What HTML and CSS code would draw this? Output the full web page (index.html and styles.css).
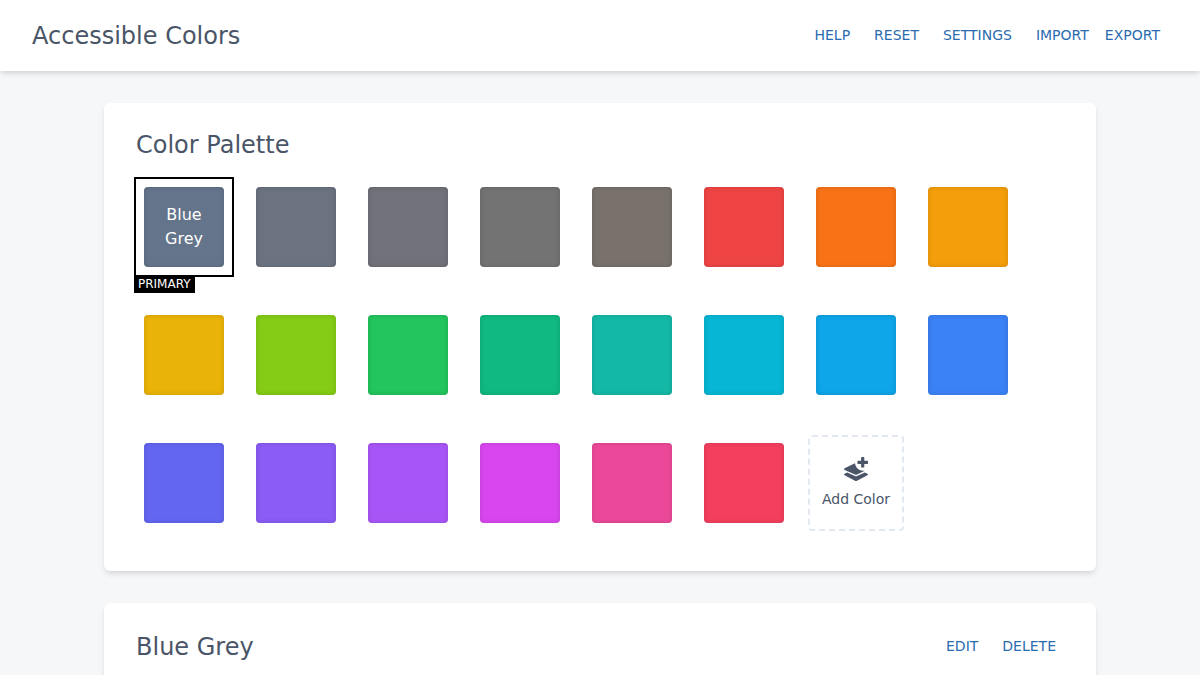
FILE: index.html
```html
<!DOCTYPE html>
<html lang="en">
<head>
    <meta charset="UTF-8">
    <meta name="viewport" content="width=device-width, initial-scale=1.0">
    <title>Accessible Colors</title>
    <link rel="stylesheet" href="styles.css">
</head>
<body>
    <header class="header">
        <h1>Accessible Colors</h1>
        <nav class="actions">
            <button class="link">Help</button>
            <button class="link">Reset</button>
            <button class="link">Settings</button>
            <div class="group">
                <button class="link">Import</button>
                <button class="link">Export</button>
            </div>
        </nav>
    </header>

    <main class="container">
        <section class="card">
            <h2>Color Palette</h2>
            <div class="palette" id="palette">
                <button class="add-color" id="addColor">
                    <svg class="icon" viewBox="0 0 24 24" fill="currentColor">
                        <path d="M17.800 0h1.800q.7 0 .7.700v3h3q.7 0 .7.700v1.800q0 .7-.7.700h-3v3q0 .7-.7.700h-1.800q-.7 0-.7-.700v-3h-3q-.7 0-.7-.700V4.400q0-.7.700-.7h3v-3q0-.7.700-.7z"/>
                        <path d="M.6 11.300L11 6.200c.4 3.600 3 6.600 6.800 7.400 1 .2 2 .3 3 .1L13 17.600q-1 .5-2 0L.6 12.900q-1.200-.8 0-1.600z"/>
                        <path d="M.6 16.800L3.200 15.600 11 19.100q1 .5 2 0l7.800-3.500 2.600 1.200q1.200.8 0 1.500L13 23.700q-1 .5-2 0L.6 18.300q-1.200-.7 0-1.500z"/>
                    </svg>
                    <span>Add Color</span>
                </button>
            </div>
        </section>

        <section class="card details">
            <div class="card-header">
                <h2>Blue Grey</h2>
                <div class="actions">
                    <button class="link">Edit</button>
                    <button class="link">Delete</button>
                </div>
            </div>
        </section>
    </main>

    <script>
        let palette = document.getElementById('palette');
        let addColor = document.getElementById('addColor');
        let primary = 'Blue Grey';
        let colors = [
            { name: 'Blue Grey', value: '#64748b' },
            { name: 'Cool Grey', value: '#6b7280' },
            { name: 'Grey', value: '#71717a' },
            { name: 'True Grey', value: '#737373' },
            { name: 'Warm Grey', value: '#78716c' },
            { name: 'Red', value: '#ef4444' },
            { name: 'Orange', value: '#f97316' },
            { name: 'Amber', value: '#f59e0b' },
            { name: 'Yellow', value: '#eab308' },
            { name: 'Lime', value: '#84cc16' },
            { name: 'Green', value: '#22c55e' },
            { name: 'Emerald', value: '#10b981' },
            { name: 'Teal', value: '#14b8a6' },
            { name: 'Cyan', value: '#06b6d4' },
            { name: 'Light Blue', value: '#0ea5e9' },
            { name: 'Blue', value: '#3b82f6' },
            { name: 'Indigo', value: '#6366f1' },
            { name: 'Violet', value: '#8b5cf6' },
            { name: 'Purple', value: '#a855f7' },
            { name: 'Fuchsia', value: '#d946ef' },
            { name: 'Pink', value: '#ec4899' },
            { name: 'Rose', value: '#f43f5e' }
        ];

        colors.forEach(color => {
            let item = document.createElement('div');
            item.className = 'color';
            let swatch = document.createElement('button');
            swatch.className = 'swatch';
            swatch.style.backgroundColor = color.value;
            swatch.setAttribute('aria-label', color.name);
            item.appendChild(swatch);
            if (color.name === primary) {
                item.classList.add('selected');
                swatch.innerText = color.name;
                let label = document.createElement('span');
                label.className = 'label';
                label.innerText = 'Primary';
                item.appendChild(label);
            }
            palette.insertBefore(item, addColor);
        });
    </script>
</body>
</html>
```
FILE: styles.css
```css
* {
    box-sizing: border-box;
}
body {
    margin: 0;
    height: 100vh;
    background: #f6f7f9;
    color: #4a5568;
    font-family: 'DejaVu Sans', sans-serif;
    font-size: 16px;
    line-height: 24px;
    overflow: hidden;
}
h1, h2 {
    margin: 0;
    font-size: 24px;
    font-weight: normal;
    line-height: 36px;
}
button {
    border: none;
    background: none;
    padding: 0;
    color: inherit;
    font-family: inherit;
    cursor: pointer;
}
.header {
    display: flex;
    justify-content: space-between;
    align-items: center;
    height: 71px;
    padding: 0 32px;
    background: #fff;
    box-shadow: 0 4px 6px -1px rgba(0, 0, 0, 0.1), 0 2px 4px -1px rgba(0, 0, 0, 0.06);
}
.actions {
    display: flex;
    gap: 8px;
}
.group {
    display: flex;
}
.link {
    padding: 8px;
    color: #2b6cb0;
    font-size: 14px;
    line-height: 21px;
    text-transform: uppercase;
}
.container {
    display: flex;
    flex-direction: column;
    gap: 32px;
    width: 992px;
    margin: 32px auto;
}
.card {
    padding: 24px 32px 8px;
    background: #fff;
    border-radius: 6px;
    box-shadow: 0 4px 6px -1px rgba(0, 0, 0, 0.1), 0 2px 4px -1px rgba(0, 0, 0, 0.06);
}
.details {
    min-height: 400px;
}
.card-header {
    display: flex;
    justify-content: space-between;
    align-items: center;
    height: 40px;
}
.card-header .actions {
    margin-bottom: 2px;
}
.palette {
    display: flex;
    flex-wrap: wrap;
    margin-top: 16px;
}
.color, .add-color {
    width: 96px;
    height: 96px;
    margin: 0 16px 32px 0;
}
.color {
    position: relative;
    padding: 8px;
}
.selected {
    box-shadow: 0 0 0 2px #000;
}
.swatch {
    width: 80px;
    height: 80px;
    padding: 8px;
    border-radius: 4px;
    color: #fff;
    font-size: 16px;
    line-height: 24px;
    box-shadow: inset 0 0 5px rgba(0, 0, 0, 0.15);
}
.label {
    position: absolute;
    top: 96px;
    left: -2px;
    padding: 0 4px;
    background: #000;
    color: #fff;
    font-size: 12px;
    line-height: 18px;
    text-transform: uppercase;
}
.add-color {
    display: flex;
    flex-direction: column;
    justify-content: center;
    align-items: center;
    border: 2px dashed #e2e8f0;
    border-radius: 4px;
    font-size: 14px;
    line-height: 21px;
}
.icon {
    width: 24px;
    height: 24px;
    margin-bottom: 8px;
}
```
